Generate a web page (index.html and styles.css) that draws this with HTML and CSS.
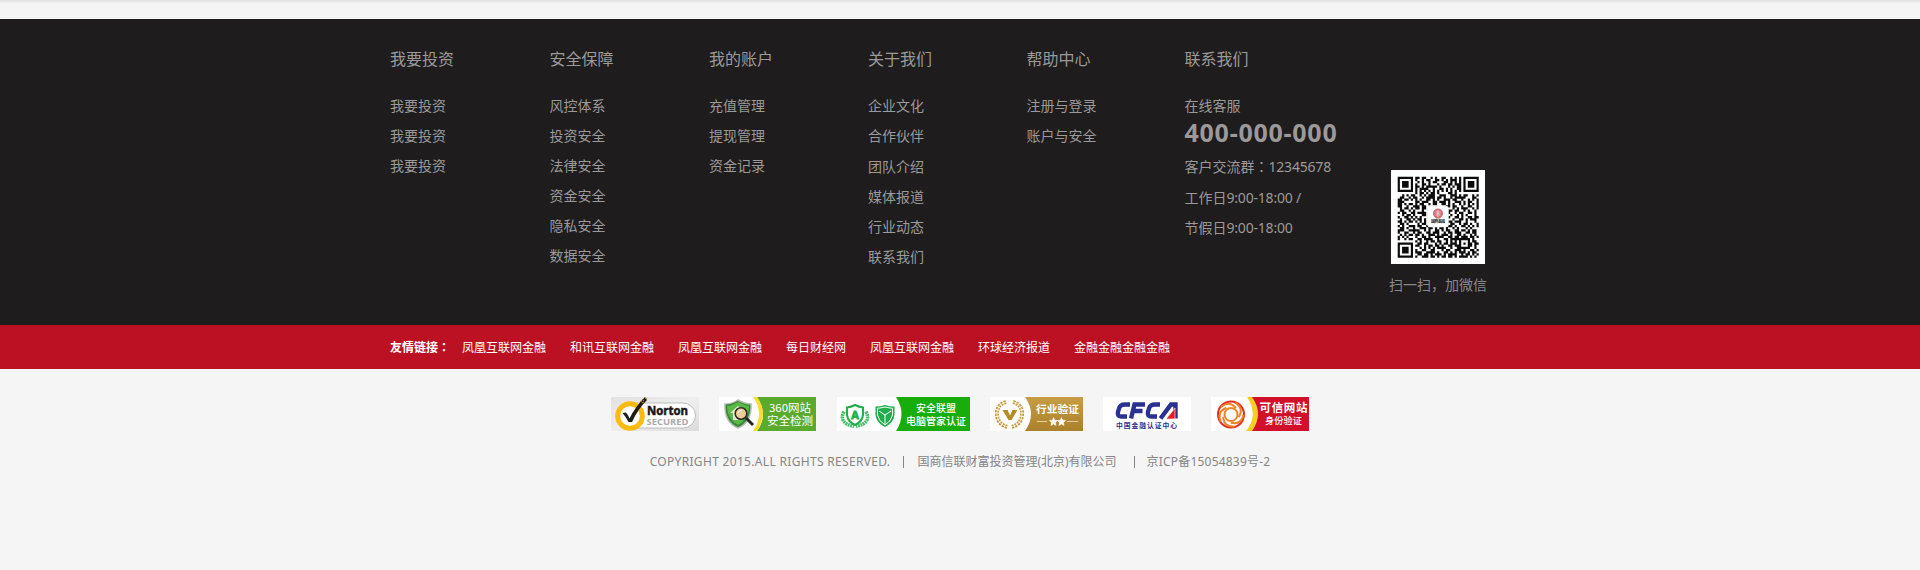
FILE: index.html
```html
<!DOCTYPE html>
<html lang="zh-CN">
<head>
<meta charset="utf-8">
<title>页脚</title>
<link rel="stylesheet" href="styles.css">
</head>
<body>
<div class="top-shade"></div>
<footer class="footer">
  <div class="nav-area">
    <div class="wrap nav">
      <dl class="col"><dt>我要投资</dt><dd>我要投资</dd><dd>我要投资</dd><dd>我要投资</dd></dl>
      <dl class="col"><dt>安全保障</dt><dd>风控体系</dd><dd>投资安全</dd><dd>法律安全</dd><dd>资金安全</dd><dd>隐私安全</dd><dd>数据安全</dd></dl>
      <dl class="col"><dt>我的账户</dt><dd>充值管理</dd><dd>提现管理</dd><dd>资金记录</dd></dl>
      <dl class="col loose"><dt>关于我们</dt><dd>企业文化</dd><dd>合作伙伴</dd><dd>团队介绍</dd><dd>媒体报道</dd><dd>行业动态</dd><dd>联系我们</dd></dl>
      <dl class="col loose"><dt>帮助中心</dt><dd>注册与登录</dd><dd>账户与安全</dd></dl>
      <dl class="col contact"><dt>联系我们</dt><dd>在线客服</dd><dd class="tel">400-000-000</dd><dd>客户交流群<span class="colon" lang="ja">：</span><span class="num">12345678</span></dd><dd>工作日<span class="num">9:00-18:00 /</span></dd><dd>节假日<span class="num">9:00-18:00</span></dd></dl>
      <div class="wechat">
        <svg class="qr" width="94" height="94" viewBox="0 0 94 94">
          <rect width="94" height="94" fill="#fff"/>
          <path id="qr-modules" transform="translate(6.7 6.7) scale(2.19)" fill="#0c0c0c"/>
          <rect x="36.500" y="36" width="21" height="21" rx="2.500" fill="#fff" stroke="#ddd" stroke-width=".6"/>
          <circle cx="47" cy="43.500" r="4.500" fill="#d9757f" stroke="#c9606c"/>
          <path d="M44.500 42h5M44.500 45h5M47 40v7M45.500 43.500h3" stroke="#fff" stroke-width=".5"/>
          <text x="47" y="53" class="qr-name" text-anchor="middle" textLength="14">国商金融</text>
        </svg>
        <p>扫一扫，加微信</p>
      </div>
    </div>
  </div>
  <div class="links-area">
    <div class="wrap links">
      <strong>友情链接<span class="colon" lang="ja">：</span></strong>
      <a>凤凰互联网金融</a><a>和讯互联网金融</a><a>凤凰互联网金融</a><a>每日财经网</a><a>凤凰互联网金融</a><a>环球经济报道</a><a>金融金融金融金融</a>
    </div>
  </div>
  <div class="badges">
    <svg width="88" height="34" viewBox="0 0 88 34">
      <defs><linearGradient id="ng" x2="1" y2="1"><stop stop-color="#e2e2e2"/><stop offset=".5" stop-color="#eee"/><stop offset="1" stop-color="#dcdcdc"/></linearGradient></defs>
      <rect width="88" height="34" fill="url(#ng)"/>
      <rect x="14" y="6" width="70.500" height="25" rx="12.500" fill="#fff" stroke="#bbb"/>
      <circle cx="19" cy="19" r="12.300" fill="#fff" stroke="#fdbb11" stroke-width="5"/>
      <path d="M11.500 16l3-.5q2 1 4 6Q24 10 34 0l2 3Q27 12 21 25h-3.500Q15 20 11.500 16z" fill="#1d1d1b"/>
      <path d="M29 4l2 1M31 2l2 2M33 5l-2 1M34 1l2 1" stroke="#a98524" stroke-width="1"/>
      <text x="36" y="17.500" class="en b" font-size="11.500" textLength="41" lengthAdjust="spacingAndGlyphs" fill="#171717" stroke="#171717" stroke-width=".5">Norton</text>
      <text x="35.500" y="28" class="en b" font-size="8" textLength="42" lengthAdjust="spacingAndGlyphs" fill="#aaa">SECURED</text>
    </svg>
    <svg class="check360" width="97" height="34" viewBox="0 0 97 34">
      <rect width="97" height="34" fill="#fff"/>
      <path d="M38 0h59v34H38q12-16 0-34z" fill="#5aab2d"/>
      <path d="M34 0h4q12 16 0 34h-4q12-18 0-34z" fill="#f8dc30"/>
      <path d="M19 3q7 4 13 4 1 18-13 24Q5 25 6 7q7 0 13-4z" fill="#358b32" stroke="#b4bab1" stroke-width="1.500"/>
      <path d="M19 5q6 3 11 4 0 13-11 19Q8 22 8 9q5 0 11-4z" fill="#5bb947"/>
      <path d="M19 9l8 7h-3v7H14v-7h-3z" fill="#e2f2d9"/>
      <path d="M27 21l7 7" stroke="#29251f" stroke-width="3"/>
      <circle cx="22" cy="16.500" r="5.800" fill="#edce9b" stroke="#302a22" stroke-width="1.600"/>
      <path d="M19 16q1-3 4-3" stroke="#fff" fill="none"/>
      <text x="50" y="14.800" class="cn" font-size="11" textLength="42" lengthAdjust="spacingAndGlyphs" fill="#fff">360网站</text>
      <text x="48" y="27.500" class="cn" font-size="11.500" textLength="46" fill="#fff">安全检测</text>
    </svg>
    <svg width="133" height="34" viewBox="0 0 133 34">
      <rect width="133" height="34" fill="#fff"/>
      <path d="M59 0h74v34H59q11-17 0-34z" fill="#19ad0c"/>
      <path d="M7 14.500Q1 26 17 29.500M29 14.500Q35 26 19 29.500" fill="none" stroke="#4abd68" stroke-width="3.500" stroke-dasharray="2 .6"/>
      <path d="M18 8q4 2 8 2.500V18q-1 7-8 10-7-3-8-10v-7.500Q14 10 18 8z" fill="#fff" stroke="#20af4c" stroke-width="2"/>
      <text x="18" y="21.500" class="en b" font-size="11" text-anchor="middle" fill="#20af4c" stroke="#20af4c" stroke-width=".8">A</text>
      <path d="M48 8q5 1.500 9.500 1.500V18q-1 8-9.500 12-8.500-4-9.500-12V9.500Q43 9.500 48 8z" fill="#1fae4b"/>
      <path d="M48 10q4 1 7.500 1.300V18q-1 6-7.500 10-6.500-4-7.500-10v-6.700Q44 11 48 10zM42 14l6 4 6-4M48 18v9" fill="none" stroke="#fff"/>
      <text x="79" y="15" class="cn m" font-size="10" textLength="40" fill="#fff">安全联盟</text>
      <text x="69" y="27.500" class="cn m" font-size="10" textLength="60" fill="#fff">电脑管家认证</text>
    </svg>
    <svg width="93" height="34" viewBox="0 0 93 34">
      <defs><linearGradient id="gold" x2="0" y2="1"><stop stop-color="#c79d45"/><stop offset="1" stop-color="#aa812b"/></linearGradient></defs>
      <rect width="93" height="34" fill="#fff"/>
      <path d="M35 0h58v34H35q12-17 0-34z" fill="url(#gold)"/>
      <path d="M16 5Q6 8 7 18t11 12M23 5q10 3 9 13T21 30" fill="none" stroke="#c79a3c" stroke-width="4" stroke-dasharray="2.200 1"/>
      <path d="M16 5Q6 8 7 18t11 12M23 5q10 3 9 13T21 30" fill="none" stroke="#fff" stroke-width=".7"/>
      <path d="M12.500 13H18v1l2 4.500 2-4.500v-1h5.500L21.500 23h-3z" fill="#b98a28"/>
      <text x="46" y="15.500" class="cn b" font-size="10.700" textLength="43" fill="#fff">行业验证</text>
      <path d="M47 24.500h10M77 24.500h11" stroke="#e5d1a0"/>
      <path d="M63.500 20.500l1.200 2.700 3 .3-2.300 2 .7 3-2.600-1.600-2.600 1.600.7-3-2.300-2 3-.3zM71.500 20.500l1.200 2.700 3 .3-2.300 2 .7 3-2.600-1.600-2.600 1.600.7-3-2.300-2 3-.3z" fill="#fff" stroke="#fff" stroke-width=".5"/>
    </svg>
    <svg width="88" height="34" viewBox="0 0 88 34">
      <rect width="88" height="34" fill="#fff"/>
      <g fill="none" stroke="#2a3190" stroke-width="4.400">
        <path d="M27 7.500h-5q-5 0-6 4l-1 3.500q-1 4.500 3 4.500h6"/>
        <path d="M28 21.500L31.500 7.500H42M30 14h9.500"/>
        <path d="M57 7.500h-5q-5 0-6 4l-1 3.500q-1 4.500 3 4.500h6"/>
        <path d="M57.500 21.500L68 7.500h4.500v14"/>
      </g>
      <path d="M63 22L72 11v11z" fill="#e5202b" stroke="#fff" stroke-width=".6"/>
      <text x="13" y="30.500" class="cn b" font-size="6.800" textLength="61" fill="#2a3190">中国金融认证中心</text>
    </svg>
    <svg width="98" height="34" viewBox="0 0 98 34">
      <rect width="98" height="34" fill="#fff"/>
      <path d="M38 0h60v34H38q14-16 0-34z" fill="#d01129"/>
      <path d="M36 0h5q12 17 0 34h-6q13-16 1-34z" fill="#f7cd20"/>
      <circle cx="20" cy="17.500" r="13" fill="none" stroke="#e32c22" stroke-width="2"/>
      <g fill="none" stroke="#f08225" stroke-width="2">
        <path d="M10 10q8-7 15 1"/>
        <path d="M10 10q8-7 15 1" transform="rotate(72 20 17.500)"/>
        <path d="M10 10q8-7 15 1" transform="rotate(144 20 17.500)"/>
        <path d="M10 10q8-7 15 1" transform="rotate(216 20 17.500)"/>
        <path d="M10 10q8-7 15 1" transform="rotate(288 20 17.500)"/>
        <circle cx="20" cy="17.500" r="6.500"/>
      </g>
      <text x="48.500" y="15" class="cn b" font-size="11.500" textLength="48" fill="#fff">可信网站</text>
      <text x="54" y="27" class="cn m" font-size="9.200" textLength="37" fill="#fff">身份验证</text>
    </svg>
  </div>
  <p class="copyright"><span class="rights">COPYRIGHT 2015.ALL RIGHTS RESERVED.</span><i></i><span class="company">国商信联财富投资管理(北京)有限公司</span><i></i><span class="icp">京ICP备15054839号-2</span></p>
</footer>
<script src="qr.js"></script>
</body>
</html>
```

FILE: styles.css
```css
body {
  margin: 0;
  min-height: 570px;
  background: #f5f5f5;
  font-family: "Noto Sans", "Noto Sans CJK SC", sans-serif;
}
dl, dd, p { margin: 0; }
.top-shade {
  height: 19px;
  background: linear-gradient(#e2e2e2, #f5f5f5 4px);
}
.wrap { width: 1140px; margin: 0 auto; }
.nav-area { height: 306px; background: #1e1c1d; }
.nav {
  display: grid;
  grid-template-columns: 159.5px 159.5px 159px 158.5px 158px 204.5px 98px;
  color: #9b9999;
  white-space: nowrap;
}
.col { padding-top: 24px; font-size: 14px; font-family: "Noto Sans CJK SC", sans-serif; }
.col dt { font-size: 16px; line-height: 30px; margin-bottom: 17px; }
.col dd { line-height: 30px; }
.loose dd { line-height: 30.3px; }
.contact dd { line-height: 30.4px; }
.num { font-family: "Noto Sans", sans-serif; line-height: 1; letter-spacing: -.2px; }
.colon { font-family: "Noto Sans CJK JP", sans-serif; line-height: 1; }
.contact .tel {
  margin: -3px 0 4px;
  font: bold 25px/30px "Noto Sans", sans-serif;
  letter-spacing: .75px;
}
.wechat { padding-top: 151px; text-align: center; font-size: 14px; }
.wechat p { line-height: 30px; margin-top: 5px; color: #8a8888; font-family: "Noto Sans CJK SC", sans-serif; }
.qr { display: block; margin: 0 auto; }
.qr-name { font: bold 4px "Noto Sans CJK SC", sans-serif; fill: #222; }
.links-area { height: 44px; background: #bb1123; }
.links {
  display: flex;
  gap: 24px;
  font-size: 12px;
  line-height: 44px;
  color: #fff;
  white-space: nowrap;
  font-family: "Noto Sans CJK SC", sans-serif;
}
.links strong { width: 72px; margin-right: -24px; }
.badges {
  display: flex;
  justify-content: center;
  gap: 20px;
  margin-top: 28px;
}
.badges svg { display: block; }
.badges .check360 { margin-right: 1px; }
.en { font-family: "Open Sans", sans-serif; }
.cn { font-family: "Noto Sans CJK SC", sans-serif; }
.b { font-weight: 700; }
.m { font-weight: 500; }
.copyright {
  display: flex;
  justify-content: center;
  align-items: center;
  margin-top: 20px;
  font-size: 12px;
  line-height: 22px;
  color: #858585;
  white-space: nowrap;
}
.rights { letter-spacing: .32px; }
.icp { letter-spacing: .2px; }
.copyright i { width: 1px; height: 12px; margin: 0 13px; background: #858585; }
.company + i { margin-left: 17px; margin-right: 12px; }
```

FILE: qr.js
```js
// One string per row, '#' is a dark module.
const rows = [
  "#######.##.##..#.#..##..#.#.#.#######",
  "#.....#.#..#.##..##.#.#.###.#.#.....#",
  "#.###.#..#.#..#.##...##.#.#.#.#.###.#",
  "#.###.#.#..##.#...#.##.##.###.#.###.#",
  "#.###.#.##.#.#####.#...#.#.##.#.###.#",
  "#.....#.#.####..#..##.#.#..##.#.....#",
  "#######.#.#.#.#.#.#.#.#.#.#.#.#######",
  "........#.##.#.##.#....##.#..........",
  "..#.#.##..#.#.###..###..###.#.##..#.#",
  ".##..#.##..#.####.##.#..#.#####...##.",
  "##.##.#.#.#..##.#.#..###.##..#..#.#.#",
  "###.....##.###..##.###.#..###.#.##..#",
  "##.#.##.#.##..#.##..##.#.#..#.#.#.#.#",
  "##..#..###.##.........##.##..#..##..#",
  ".#.##.#.##.##.........#..#.#.###..#.#",
  ".##..#.#...#...........##.##..#.#..#.",
  "#.##..##.####.........##..#.##..##.#.",
  "..#.##.#...##.........#.#..#.#.#...#.",
  "#..##.#.#.#...........##..##.#..##.##",
  ".#..##.#.##.#.........#..#..##.#.###.",
  "##.#.##.#.#.#.........###.###..#...#.",
  ".##.#....#.##.........#.##..#.##.#..#",
  "#.#..###.##..#.........##.#..##.#.#.#",
  ".##.#..#..###.##.#.##.#..#.#...#.#...",
  "###..#####..#.#..##.#.##..##.##.#.##.",
  "#..##..#.##..##.###..#.##.###..##.##.",
  ".#.#.##.##.#..###.#.###.#..##.#..#.#.",
  "#.#.#...#..##.#..####..##.##.###.##.#",
  "#..#.##..##.####..#..##.#########.#..",
  "........#.#..#.##.##..#.#.#.#...#.##.",
  "#######..##.##...#.#.##.###.#.#.##.##",
  "#.....#.##..#.##.##.#..##.###...##.#.",
  "#.###.#...#.#.#.#.####..#..######..#.",
  "#.###.#.#..##..##...#.##..###.#..##.#",
  "#.###.#.###..####.#..##.#.#.###.#.##.",
  "#.....#..##.##.#.###.#.####..#.##.#.#",
  "#######.#..###.##.#.##.##.#.####.#.#.",
];
let d = "";
rows.forEach((row, y) => {
  for (const run of row.matchAll(/#+/g)) {
    d += `M${run.index} ${y}h${run[0].length}v1.03h-${run[0].length}z`;
  }
});
document.getElementById("qr-modules").setAttribute("d", d);
```
